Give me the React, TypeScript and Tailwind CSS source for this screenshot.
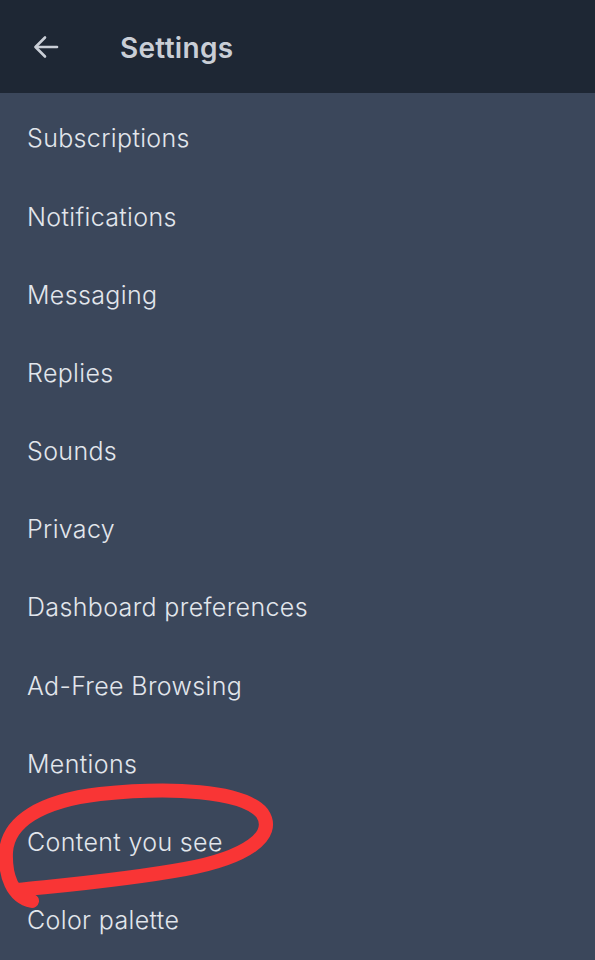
import {FC} from "react";

const items = [
  "Subscriptions",
  "Notifications",
  "Messaging",
  "Replies",
  "Sounds",
  "Privacy",
  "Dashboard preferences",
  "Ad-Free Browsing",
  "Mentions",
  "Content you see",
  "Color palette",
];

const BackArrow: FC = () => (
  <svg width="28" height="28" viewBox="0 0 28 28" fill="none" stroke="#c9ced6" strokeWidth="2.6" strokeLinecap="round" strokeLinejoin="round">
    <path d="M25 14H4" />
    <path d="M13 4.5L3.5 14L13 23.5" />
  </svg>
);

export default function App() {
  return (
    <div className="relative w-[595px] h-[960px] overflow-hidden bg-[#3b475b] font-['Inter',sans-serif]">
      <div className="h-[93px] bg-[#1e2734] flex items-center">
        <div className="w-[120px] pl-[32px] flex items-center">
          <BackArrow />
        </div>
        <div className="text-[28px] font-semibold text-[#c9ced6] pt-[2px] tracking-[0.3px]">Settings</div>
      </div>
      <div className="pt-[7px] flex flex-col">
        {items.map((item) => (
          <div key={item} className="h-[78.2px] flex items-center pl-[27px] text-[25px] font-light tracking-[0.35px] text-[#e2e6ec]">
            {item}
          </div>
        ))}
      </div>
      {/* hand drawn circle round "Content you see" */}
      <svg className="absolute left-0 top-0 pointer-events-none" width="595" height="960" viewBox="0 0 595 960" fill="none">
        <path
          d="M32 901 C12 897, 5 875, 6 852 C8 822, 40 801, 100 794 C170 787, 242 790, 262 813 C278 836, 245 858, 185 869 C125 880, 65 885, 18 890"
          stroke="#f93535"
          strokeWidth="14"
          strokeLinecap="round"
          strokeLinejoin="round"
        />
      </svg>
    </div>
  );
}
